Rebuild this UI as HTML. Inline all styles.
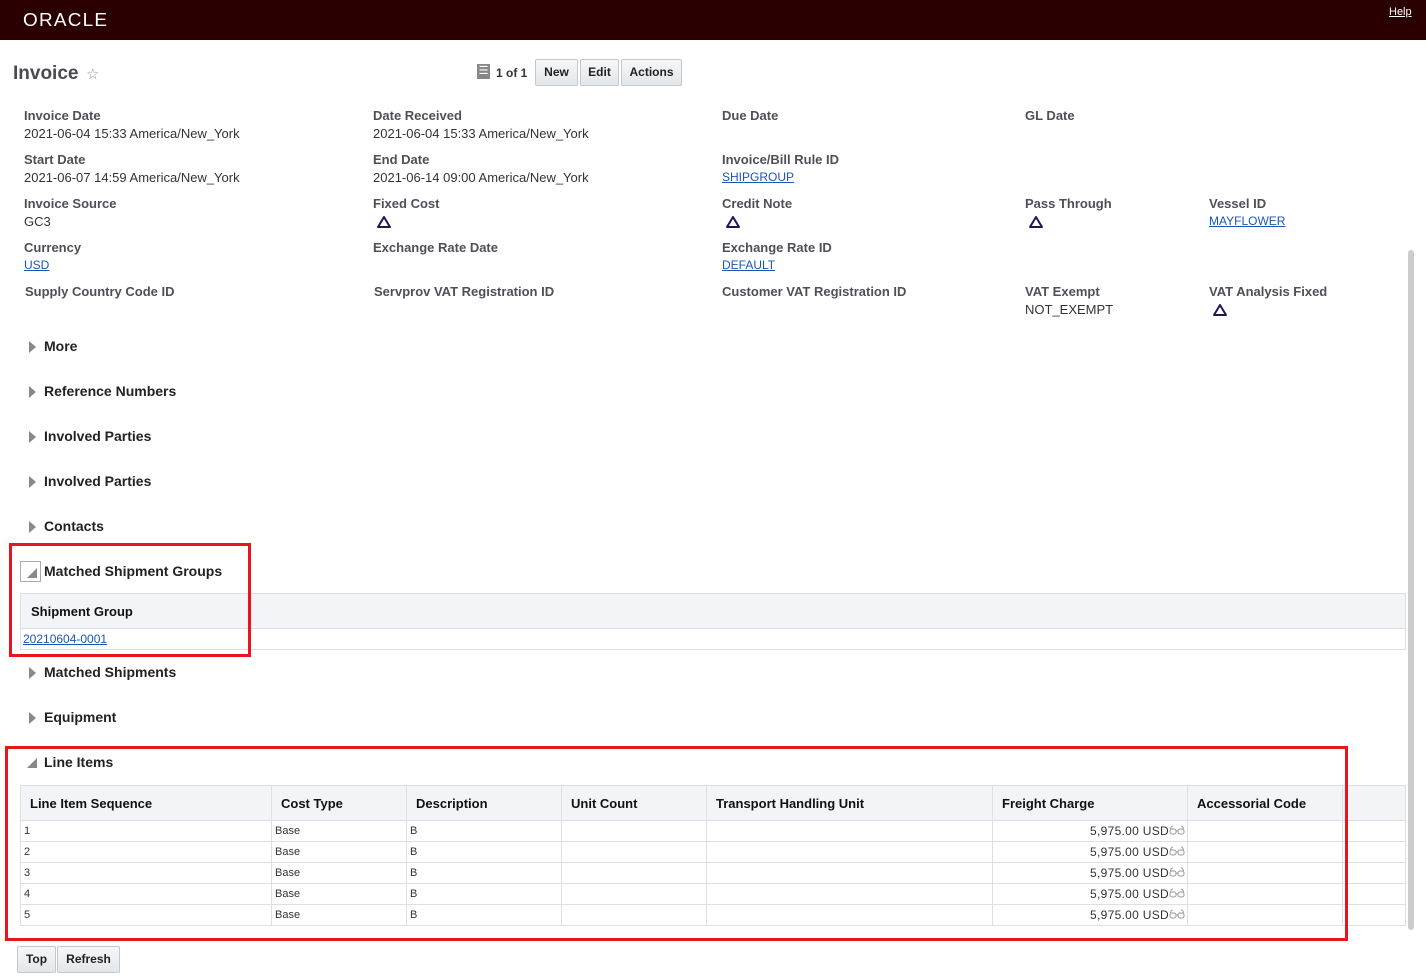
<!DOCTYPE html><html><head><style>
body{margin:0;width:1426px;height:977px;position:relative;font-family:"Liberation Sans",sans-serif;background:#fff;overflow:hidden}
.a{position:absolute;white-space:nowrap}
.l{font-size:13px;font-weight:bold;color:#4f4f57}
.v{font-size:13px;color:#333}
a,.lk{color:#1a56b8;text-decoration:underline;font-size:12px}
.tri{position:absolute;width:16px;height:14px}
.sec{font-size:14px;font-weight:bold;color:#222}
.arr{position:absolute;width:0;height:0;border-left:7px solid #888;border-top:6px solid transparent;border-bottom:6px solid transparent}
.btn{position:absolute;top:59px;height:25px;border:1px solid #c4c8cc;background:linear-gradient(#f6f7f8,#e3e6e9);font-size:12px;font-weight:bold;color:#222;line-height:25px;text-align:center;border-radius:2px}
table{border-collapse:collapse;position:absolute;left:20px;width:1386px;font-size:11px;color:#333;table-layout:fixed}
th{background:#f2f4f7;text-align:left;font-size:13px;color:#111;border:1px solid #dce0e5;padding:0 0 0 9px;height:34px}
td{border:1px solid #dce0e5;height:20px;padding:0 3px;overflow:hidden;white-space:nowrap}
td.f{text-align:right;font-size:12px;letter-spacing:0.3px;padding-right:2px}
.red{position:absolute;border:3px solid #e8141e}
</style></head><body>
<div class="a" style="left:0;top:0;width:1426px;height:40px;background:#2b0000"></div>
<div class="a" style="left:23px;top:10px;color:#fff;font-size:18px;letter-spacing:1.2px;transform:scaleX(1.05);transform-origin:left">ORACLE</div>
<div class="a" style="left:1389px;top:6px;color:#fff;font-size:11px;text-decoration:underline">Help</div>
<div class="a" style="left:13px;top:63px;font-size:19px;font-weight:bold;color:#4a4a52">Invoice</div>
<div class="a" style="left:86px;top:65px;font-size:15px;color:#999">☆</div>
<div class="a" style="left:477px;top:64px;width:13px;height:15px;background:#888;color:#fff;font-size:11px;text-align:center;line-height:15px">☰</div>
<div class="a" style="left:496px;top:66px;font-size:12px;font-weight:bold;color:#333">1 of 1</div>
<div class="btn" style="left:535px;width:41px">New</div>
<div class="btn" style="left:580px;width:37px">Edit</div>
<div class="btn" style="left:621px;width:59px">Actions</div>

<div class="a l" style="left:24px;top:108px">Invoice Date</div><div class="a v" style="left:24px;top:126px">2021-06-04 15:33 America/New_York</div>
<div class="a l" style="left:373px;top:108px">Date Received</div><div class="a v" style="left:373px;top:126px">2021-06-04 15:33 America/New_York</div>
<div class="a l" style="left:722px;top:108px">Due Date</div>
<div class="a l" style="left:1025px;top:108px">GL Date</div>
<div class="a l" style="left:24px;top:152px">Start Date</div><div class="a v" style="left:24px;top:170px">2021-06-07 14:59 America/New_York</div>
<div class="a l" style="left:373px;top:152px">End Date</div><div class="a v" style="left:373px;top:170px">2021-06-14 09:00 America/New_York</div>
<div class="a l" style="left:722px;top:152px">Invoice/Bill Rule ID</div><div class="a lk" style="left:722px;top:170px">SHIPGROUP</div>
<div class="a l" style="left:24px;top:196px">Invoice Source</div><div class="a v" style="left:24px;top:214px">GC3</div>
<div class="a l" style="left:373px;top:196px">Fixed Cost</div>
<div class="a l" style="left:722px;top:196px">Credit Note</div>
<div class="a l" style="left:1025px;top:196px">Pass Through</div>
<div class="a l" style="left:1209px;top:196px">Vessel ID</div><div class="a lk" style="left:1209px;top:214px">MAYFLOWER</div>
<div class="a l" style="left:24px;top:240px">Currency</div><div class="a lk" style="left:24px;top:258px">USD</div>
<div class="a l" style="left:373px;top:240px">Exchange Rate Date</div>
<div class="a l" style="left:722px;top:240px">Exchange Rate ID</div><div class="a lk" style="left:722px;top:258px">DEFAULT</div>
<div class="a l" style="left:25px;top:284px">Supply Country Code ID</div>
<div class="a l" style="left:374px;top:284px">Servprov VAT Registration ID</div>
<div class="a l" style="left:722px;top:284px">Customer VAT Registration ID</div>
<div class="a l" style="left:1025px;top:284px">VAT Exempt</div><div class="a v" style="left:1025px;top:302px">NOT_EXEMPT</div>
<div class="a l" style="left:1209px;top:284px">VAT Analysis Fixed</div>
<svg class="tri" style="left:376px;top:215px" viewBox="0 0 16 14"><path d="M8 2L14 12H2Z" fill="none" stroke="#1a1a5a" stroke-width="2" stroke-linejoin="round"/></svg>
<svg class="tri" style="left:725px;top:215px" viewBox="0 0 16 14"><path d="M8 2L14 12H2Z" fill="none" stroke="#1a1a5a" stroke-width="2" stroke-linejoin="round"/></svg>
<svg class="tri" style="left:1028px;top:215px" viewBox="0 0 16 14"><path d="M8 2L14 12H2Z" fill="none" stroke="#1a1a5a" stroke-width="2" stroke-linejoin="round"/></svg>
<svg class="tri" style="left:1212px;top:303px" viewBox="0 0 16 14"><path d="M8 2L14 12H2Z" fill="none" stroke="#1a1a5a" stroke-width="2" stroke-linejoin="round"/></svg>

<div class="arr" style="left:29px;top:341px"></div><div class="a sec" style="left:44px;top:338px">More</div>
<div class="arr" style="left:29px;top:386px"></div><div class="a sec" style="left:44px;top:383px">Reference Numbers</div>
<div class="arr" style="left:29px;top:431px"></div><div class="a sec" style="left:44px;top:428px">Involved Parties</div>
<div class="arr" style="left:29px;top:476px"></div><div class="a sec" style="left:44px;top:473px">Involved Parties</div>
<div class="arr" style="left:29px;top:521px"></div><div class="a sec" style="left:44px;top:518px">Contacts</div>
<div class="a" style="left:20px;top:561px;width:21px;height:21px;border:1px solid #aaa;box-sizing:border-box"></div>
<div class="a" style="left:27px;top:568px;width:0;height:0;border-left:10px solid transparent;border-bottom:10px solid #888"></div>
<div class="a sec" style="left:44px;top:563px">Matched Shipment Groups</div>
<table style="top:593px"><tr><th style="height:34px;padding-left:10px">Shipment Group</th></tr><tr><td style="padding-left:2px"><span class="lk">20210604-0001</span></td></tr></table>
<div class="arr" style="left:29px;top:667px"></div><div class="a sec" style="left:44px;top:664px">Matched Shipments</div>
<div class="arr" style="left:29px;top:712px"></div><div class="a sec" style="left:44px;top:709px">Equipment</div>
<div class="a" style="left:27px;top:758px;width:0;height:0;border-left:10px solid transparent;border-bottom:10px solid #888"></div>
<div class="a sec" style="left:44px;top:754px">Line Items</div>
<table style="top:785px">
<colgroup><col style="width:251px"><col style="width:135px"><col style="width:155px"><col style="width:145px"><col style="width:286px"><col style="width:195px"><col style="width:155px"><col></colgroup>
<tr><th>Line Item Sequence</th><th>Cost Type</th><th>Description</th><th>Unit Count</th><th>Transport Handling Unit</th><th>Freight Charge</th><th>Accessorial Code</th><th></th></tr>
<tr><td>1</td><td>Base</td><td>B</td><td></td><td></td><td class="f">5,975.00 USD<svg width="16" height="10" viewBox="0 0 16 10"><g fill="none" stroke="#999" stroke-width="1"><rect x="1" y="4" width="6" height="5" rx="2"/><rect x="9" y="4" width="6" height="5" rx="2"/><path d="M7 6h2M1.5 4Q2 1 4 1M14.5 4Q14 1 12 1"/></g></svg></td><td></td><td></td></tr>
<tr><td>2</td><td>Base</td><td>B</td><td></td><td></td><td class="f">5,975.00 USD<svg width="16" height="10" viewBox="0 0 16 10"><g fill="none" stroke="#999" stroke-width="1"><rect x="1" y="4" width="6" height="5" rx="2"/><rect x="9" y="4" width="6" height="5" rx="2"/><path d="M7 6h2M1.5 4Q2 1 4 1M14.5 4Q14 1 12 1"/></g></svg></td><td></td><td></td></tr>
<tr><td>3</td><td>Base</td><td>B</td><td></td><td></td><td class="f">5,975.00 USD<svg width="16" height="10" viewBox="0 0 16 10"><g fill="none" stroke="#999" stroke-width="1"><rect x="1" y="4" width="6" height="5" rx="2"/><rect x="9" y="4" width="6" height="5" rx="2"/><path d="M7 6h2M1.5 4Q2 1 4 1M14.5 4Q14 1 12 1"/></g></svg></td><td></td><td></td></tr>
<tr><td>4</td><td>Base</td><td>B</td><td></td><td></td><td class="f">5,975.00 USD<svg width="16" height="10" viewBox="0 0 16 10"><g fill="none" stroke="#999" stroke-width="1"><rect x="1" y="4" width="6" height="5" rx="2"/><rect x="9" y="4" width="6" height="5" rx="2"/><path d="M7 6h2M1.5 4Q2 1 4 1M14.5 4Q14 1 12 1"/></g></svg></td><td></td><td></td></tr>
<tr><td>5</td><td>Base</td><td>B</td><td></td><td></td><td class="f">5,975.00 USD<svg width="16" height="10" viewBox="0 0 16 10"><g fill="none" stroke="#999" stroke-width="1"><rect x="1" y="4" width="6" height="5" rx="2"/><rect x="9" y="4" width="6" height="5" rx="2"/><path d="M7 6h2M1.5 4Q2 1 4 1M14.5 4Q14 1 12 1"/></g></svg></td><td></td><td></td></tr>
</table>
<div class="red" style="left:9px;top:543px;width:236px;height:108px"></div>
<div class="red" style="left:5px;top:746px;width:1337px;height:189px"></div>
<div class="a" style="left:1408px;top:250px;width:6px;height:680px;background:#ccc;border-radius:3px"></div>
<div class="btn" style="left:17px;top:946px;width:37px">Top</div>
<div class="btn" style="left:57px;top:946px;width:61px">Refresh</div>
</body></html>
